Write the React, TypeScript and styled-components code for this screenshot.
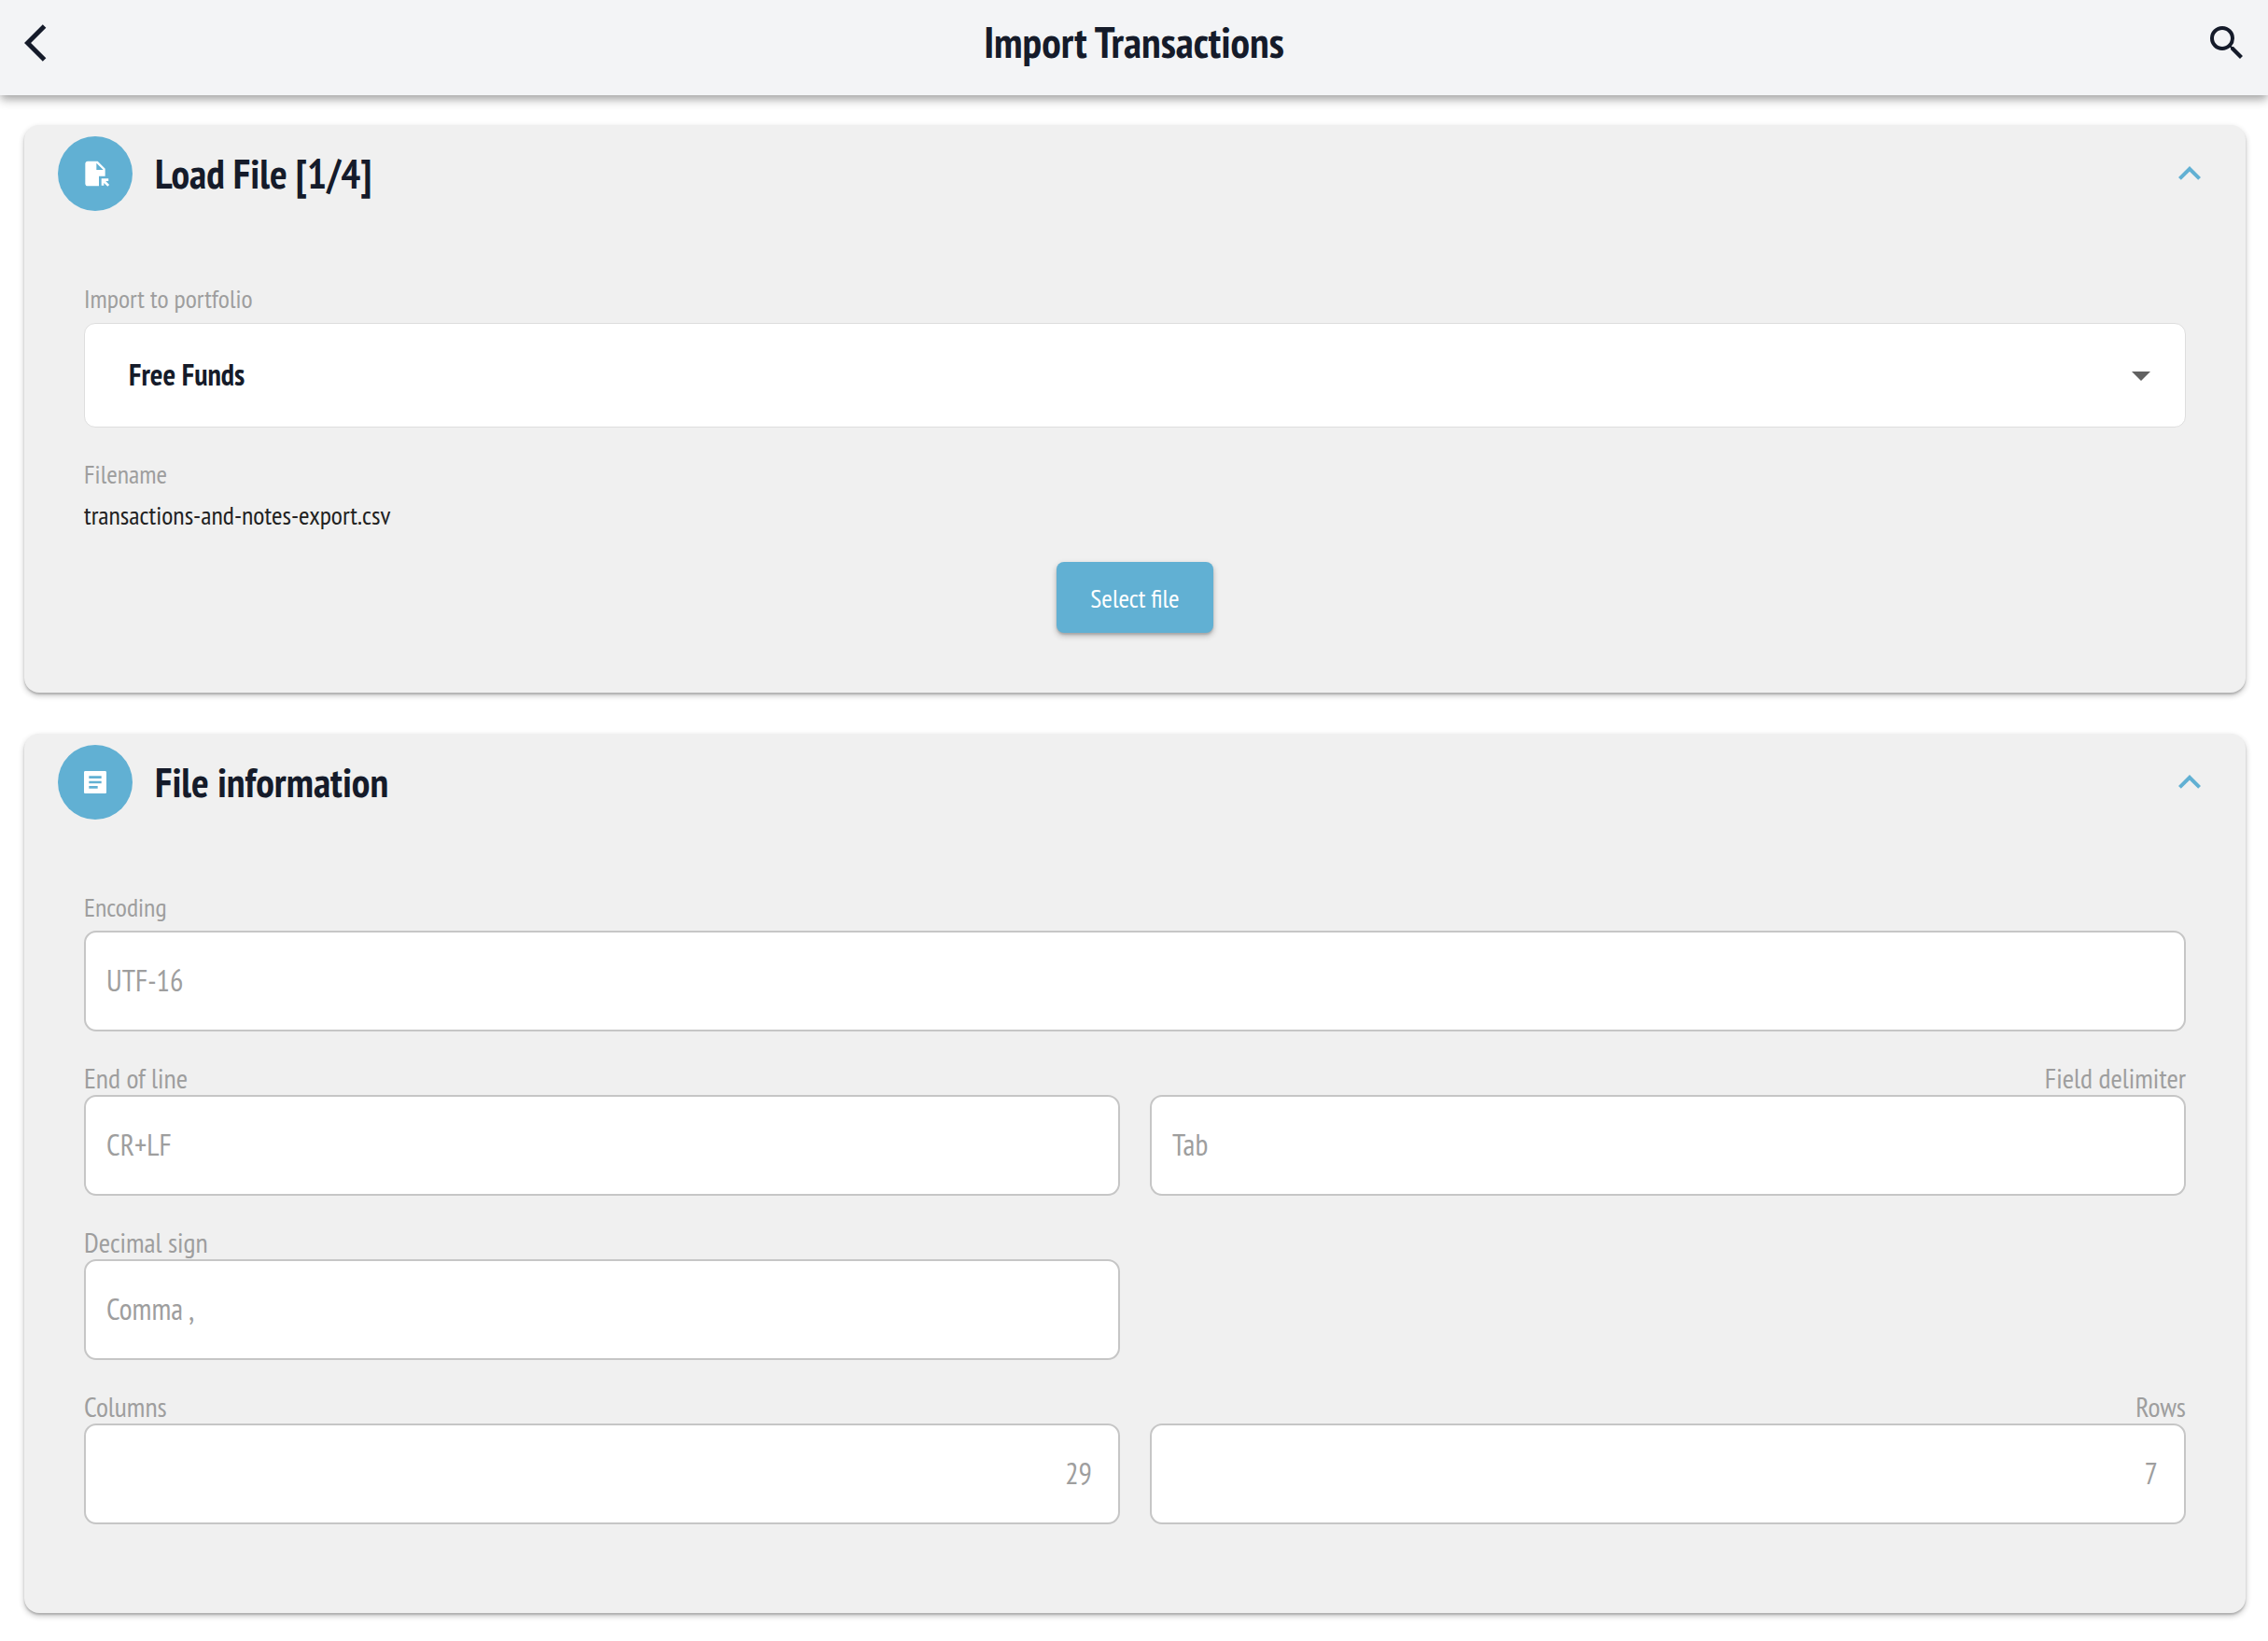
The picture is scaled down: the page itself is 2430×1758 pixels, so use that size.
import React, { useState } from "react";
import styled, { createGlobalStyle } from "styled-components";

const ink = "#151b2a";
const accent = "#61b0d3";
const muted = "#9e9e9e";

const GlobalStyle = createGlobalStyle`
  *, *::before, *::after { box-sizing: border-box; }
  body {
    margin: 0;
    background: #ffffff;
    color: ${ink};
    font-family: "PT Sans Narrow", "Liberation Sans Narrow", "Open Sans", sans-serif;
  }
  button, input, select { font-family: inherit; }
`;

const AppBar = styled.header`
  position: relative;
  display: grid;
  grid-template-columns: 1fr auto 1fr;
  align-items: center;
  height: 102px;
  padding: 0 20px 10px;
  background: #f3f4f6;
  box-shadow:
    0 4px 8px -2px rgba(0, 0, 0, 0.2),
    0 6px 10px rgba(0, 0, 0, 0.16),
    0 2px 14px rgba(0, 0, 0, 0.1);
`;

const PageTitle = styled.h1`
  grid-column: 2;
  margin: 0;
  padding-bottom: 2px;
  font-size: 46px;
  line-height: 56px;
  font-weight: 700;
`;

const IconButton = styled.button<{ $tint?: string; $end?: boolean }>`
  display: flex;
  justify-self: ${(p) => (p.$end ? "end" : "start")};
  padding: 0;
  border: 0;
  background: none;
  color: ${(p) => p.$tint ?? ink};
  cursor: pointer;
`;

const Glyph = styled.svg<{ $size: number }>`
  display: block;
  width: ${(p) => p.$size}px;
  height: ${(p) => p.$size}px;
  fill: currentColor;
`;

const Content = styled.main`
  display: flex;
  flex-direction: column;
  gap: 44px;
  padding: 32px 24px 30px 26px;
`;

const Card = styled.section`
  border-radius: 16px;
  background: #f0f0f0;
  box-shadow:
    0 2px 2px rgba(0, 0, 0, 0.16),
    0 3px 6px rgba(0, 0, 0, 0.24);
`;

const CardHeader = styled.div`
  display: flex;
  align-items: center;
  gap: 24px;
  padding: 12px 36px;
`;

const Badge = styled.span`
  display: flex;
  align-items: center;
  justify-content: center;
  width: 80px;
  height: 80px;
  border-radius: 50%;
  background: ${accent};
  color: #ffffff;
`;

const CardTitle = styled.h2`
  flex: 1;
  margin: 0;
  font-size: 44px;
  line-height: 56px;
  font-weight: 700;
`;

const CardBody = styled.div<{ $bottom: number }>`
  display: flex;
  flex-direction: column;
  gap: 32px;
  padding: 64px 64px ${(p) => p.$bottom}px;
`;

const Stack = styled.div`
  display: flex;
  flex-direction: column;
  gap: 8px;
`;

const Label = styled.label`
  font-size: 28px;
  line-height: 36px;
  color: ${muted};
`;

const Caption = styled.span`
  font-size: 28px;
  line-height: 36px;
  color: ${muted};
`;

const FileName = styled.output`
  font-size: 28px;
  line-height: 36px;
  color: #212121;
`;

const SelectBox = styled.div`
  display: grid;
  align-items: center;
  & > * { grid-area: 1 / 1; }
  & > svg {
    justify-self: end;
    margin-right: 24px;
    color: #616161;
    pointer-events: none;
  }
`;

const Select = styled.select`
  appearance: none;
  width: 100%;
  height: 112px;
  padding: 0 96px 2px 47px;
  border: 1px solid #dedede;
  border-radius: 12px;
  background: #ffffff;
  color: ${ink};
  font-size: 32px;
  font-weight: 700;
`;

const PrimaryButton = styled.button`
  align-self: center;
  height: 76px;
  min-width: 168px;
  padding: 0 32px;
  border: 0;
  border-radius: 8px;
  background: ${accent};
  color: #ffffff;
  font-size: 28px;
  cursor: pointer;
  box-shadow:
    0 2px 2px rgba(0, 0, 0, 0.12),
    0 3px 6px rgba(0, 0, 0, 0.26);
`;

const FieldRows = styled.div`
  display: grid;
  grid-template-columns: 1fr 1fr;
  gap: 34px 32px;
`;

const Field = styled.div<{ $wide?: boolean; $first?: boolean }>`
  display: flex;
  flex-direction: column;
  gap: ${(p) => (p.$wide ? 7 : 2)}px;
  grid-column: ${(p) => (p.$wide ? "1 / -1" : p.$first ? "1" : "auto")};
`;

const RowLabel = styled.label<{ $end?: boolean }>`
  font-size: 30px;
  line-height: 32px;
  color: ${muted};
  text-align: ${(p) => (p.$end ? "right" : "left")};
`;

const TextInput = styled.input<{ $numeric?: boolean }>`
  width: 100%;
  height: 108px;
  padding: 0 28px 2px 22px;
  border: 2px solid #c6c6c6;
  border-radius: 13px;
  background: #ffffff;
  color: ${muted};
  font-size: 32px;
  text-align: ${(p) => (p.$numeric ? "right" : "left")};
`;

const paths = {
  back: "M11.67 3.87 9.9 2.1 0 12l9.9 9.9 1.77-1.77L3.54 12z",
  search:
    "M15.5 14h-.79l-.28-.27A6.47 6.47 0 0 0 16 9.5 6.5 6.5 0 1 0 9.5 16c1.61 0 3.09-.59 4.23-1.57l.27.28v.79l5 4.99L20.49 19l-4.99-5zm-6 0C7.01 14 5 11.99 5 9.5S7.01 5 9.5 5 14 7.01 14 9.5 11.99 14 9.5 14z",
  collapse: "M12 8l-6 6 1.41 1.41L12 10.83l4.59 4.58L18 14z",
  dropDown: "M7 10l5 5 5-5z",
  fileOpen:
    "M14 2H6c-1.1 0-1.99.9-1.99 2L4 20c0 1.1.89 2 1.99 2H15v-8h5V8l-6-6zm-1 7V3.5L18.5 9H13zm4 12.66V16h5.66v2h-2.24l2.95 2.95-1.41 1.41L19 19.41v2.24h-2z",
  article:
    "M20 3H4c-.55 0-1 .45-1 1v16c0 .55.45 1 1 1h16c.55 0 1-.45 1-1V4c0-.55-.45-1-1-1zm-6 14H7v-2h7v2zm3-4H7v-2h10v2zm0-4H7V7h10v2z",
};

function Icon({ name, size = 48 }: { name: keyof typeof paths; size?: number }) {
  const viewBox = name === "back" ? "-3 0 24 24" : "0 0 24 24";
  return (
    <Glyph $size={size} viewBox={viewBox} aria-hidden="true">
      <path d={paths[name]} />
    </Glyph>
  );
}

interface SectionProps {
  icon: keyof typeof paths;
  title: string;
  bottom: number;
  children: React.ReactNode;
}

function Section({ icon, title, bottom, children }: SectionProps) {
  const [open, setOpen] = useState(true);
  return (
    <Card>
      <CardHeader>
        <Badge>
          <Icon name={icon} size={32} />
        </Badge>
        <CardTitle>{title}</CardTitle>
        <IconButton
          type="button"
          $tint={accent}
          aria-label={`Toggle ${title}`}
          aria-expanded={open}
          onClick={() => setOpen(!open)}
        >
          <Icon name="collapse" />
        </IconButton>
      </CardHeader>
      {open && <CardBody $bottom={bottom}>{children}</CardBody>}
    </Card>
  );
}

interface InfoField {
  id: string;
  label: string;
  value: string;
  end?: boolean;
  numeric?: boolean;
}

const fields: InfoField[] = [
  { id: "eol", label: "End of line", value: "CR+LF" },
  { id: "delimiter", label: "Field delimiter", value: "Tab", end: true },
  { id: "decimal", label: "Decimal sign", value: "Comma ," },
  { id: "columns", label: "Columns", value: "29", numeric: true },
  { id: "rows", label: "Rows", value: "7", end: true, numeric: true },
];

export default function App() {
  return (
    <>
      <GlobalStyle />
      <AppBar>
        <IconButton type="button" aria-label="Back">
          <Icon name="back" />
        </IconButton>
        <PageTitle>Import Transactions</PageTitle>
        <IconButton type="button" $end aria-label="Search">
          <Icon name="search" />
        </IconButton>
      </AppBar>
      <Content>
        <Section icon="fileOpen" title="Load File [1/4]" bottom={64}>
          <Stack>
            <Label htmlFor="portfolio">Import to portfolio</Label>
            <SelectBox>
              <Select id="portfolio" defaultValue="free">
                <option value="free">Free Funds</option>
              </Select>
              <Icon name="dropDown" />
            </SelectBox>
          </Stack>
          <Stack>
            <Caption>Filename</Caption>
            <FileName>transactions-and-notes-export.csv</FileName>
          </Stack>
          <PrimaryButton type="button">Select file</PrimaryButton>
        </Section>
        <Section icon="article" title="File information" bottom={95}>
          <FieldRows>
            <Field $wide>
              <Label htmlFor="encoding">Encoding</Label>
              <TextInput id="encoding" defaultValue="UTF-16" readOnly />
            </Field>
            {fields.map((f) => (
              <Field key={f.id} $first={!f.end}>
                <RowLabel htmlFor={f.id} $end={f.end}>
                  {f.label}
                </RowLabel>
                <TextInput id={f.id} $numeric={f.numeric} defaultValue={f.value} readOnly />
              </Field>
            ))}
          </FieldRows>
        </Section>
      </Content>
    </>
  );
}
